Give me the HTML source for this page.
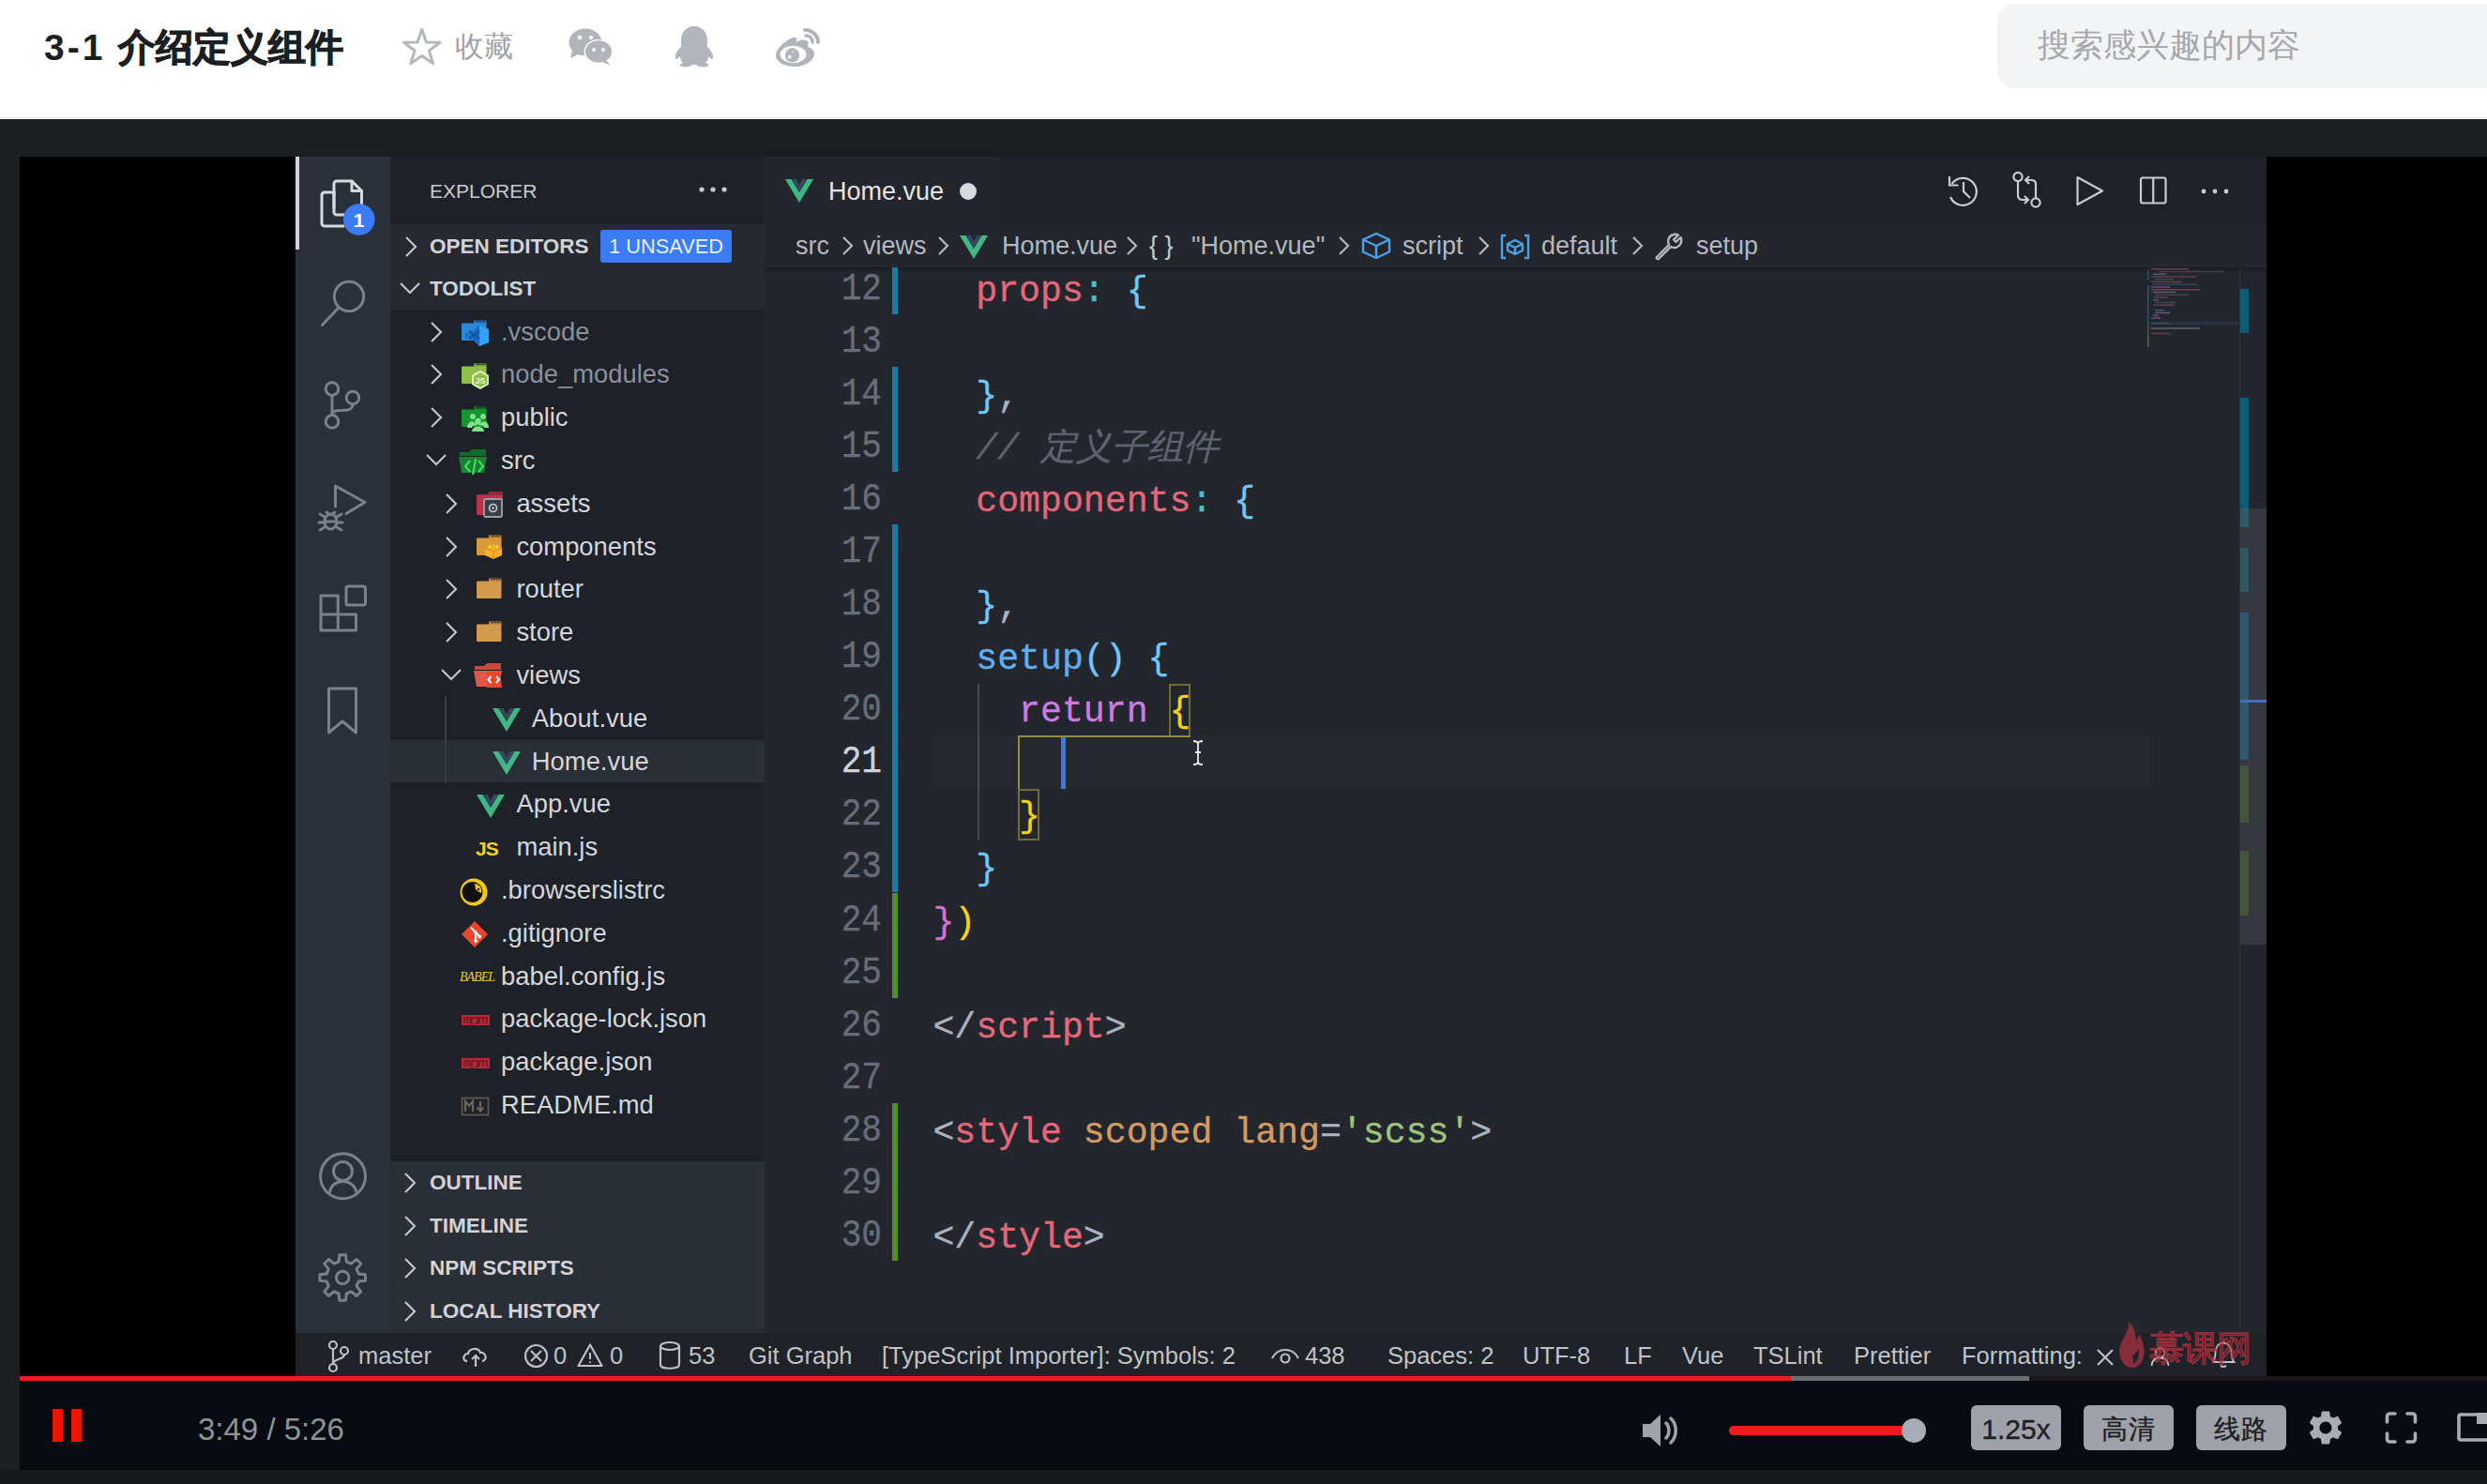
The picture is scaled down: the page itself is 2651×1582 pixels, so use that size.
<!DOCTYPE html><html><head><meta charset="utf-8"><style>
*{margin:0;padding:0;box-sizing:border-box}
html,body{width:2651px;height:1582px;overflow:hidden;background:#fff;font-family:"Liberation Sans",sans-serif}
.a{position:absolute;white-space:nowrap}
.m{font-family:"Liberation Mono",monospace;-webkit-text-stroke:0.35px currentColor}
.t{font-size:27.4px;color:#d3d6dc;line-height:46px}
.sec{font-size:22.5px;font-weight:bold;color:#d0d3d9;line-height:46px}
.sb{font-size:25.5px;color:#bfc3ca;line-height:46px}
</style></head><body>
<div class="a" style="left:0px;top:0px;width:2651px;height:127px;background:#fff;"></div>
<div class="a" style="left:0px;top:125px;width:2651px;height:2px;background:#f0f1f3;"></div>
<div class="a" style="left:47px;top:26px;font-size:40px;font-weight:bold;color:#1c1f21;line-height:48px"><span style="letter-spacing:3px;font-size:39px">3-1 </span><span style="-webkit-text-stroke:1.1px #1c1f21">介绍定义组件</span></div>
<svg class="a" style="left:427px;top:27.8px" width="46" height="44" viewBox="0 0 46 44"><path d="M22.7 3.3 L27.4 17.0 L41.9 17.3 L30.4 26.0 L34.6 39.8 L22.7 31.6 L10.8 39.8 L15.0 26.0 L3.5 17.3 L18.0 17.0 Z" fill="none" stroke="#b3b8be" stroke-width="3" stroke-linejoin="round"/></svg>
<div class="a " style="left:485px;top:31px;font-size:31px;color:#9ea3aa;line-height:38px">收藏</div>
<svg class="a" style="left:604px;top:28px" width="52" height="44" viewBox="0 0 52 44">
<ellipse cx="20" cy="17" rx="17.5" ry="14.5" fill="#b1b5bb"/><path d="M6 26 L4 34 L14 29 Z" fill="#b1b5bb"/>
<ellipse cx="34" cy="27" rx="15.5" ry="13" fill="#fff"/><ellipse cx="34" cy="27" rx="14" ry="11.8" fill="#b1b5bb"/>
<path d="M42 36 L47 42 L38 38 Z" fill="#b1b5bb"/>
<circle cx="14" cy="12" r="2.2" fill="#fff"/><circle cx="26" cy="12" r="2.2" fill="#fff"/>
<circle cx="29" cy="25" r="2" fill="#fff"/><circle cx="39" cy="25" r="2" fill="#fff"/></svg>
<svg class="a" style="left:718px;top:27px" width="44" height="46" viewBox="0 0 44 46">
<path d="M22 1 C13 1 8 8 8 16 C8 19 8.5 21 8 23 C5 26 1 31 2 35 C3 37 5 35 6.5 33 C7 36 8 38 10 40 C6 41 5 43 9 44 C13 45 18 44 20 42 L24 42 C26 44 31 45 35 44 C39 43 38 41 34 40 C36 38 37 36 37.5 33 C39 35 41 37 42 35 C43 31 39 26 36 23 C35.5 21 36 19 36 16 C36 8 31 1 22 1 Z" fill="#b1b5bb"/></svg>
<svg class="a" style="left:824px;top:28px" width="52" height="44" viewBox="0 0 52 44">
<path d="M21 12 C13 15 3 24 3 31 C3 38 12 43 23 43 C35 43 44 36 44 29 C44 25 40 23 37 22 C38 19 38 16 35 15 C32 14 28 15 25 17 C26 14 25 11 21 12 Z" fill="#b1b5bb"/>
<ellipse cx="21.5" cy="30" rx="14" ry="9.2" fill="#fff"/><circle cx="20.5" cy="30.8" r="7.6" fill="#b1b5bb"/>
<circle cx="17.8" cy="32.6" r="1.9" fill="#fff"/><path d="M20.5 27.8 L22.5 26.8" stroke="#fff" stroke-width="1"/>
<path d="M34 4 C42 4 48 10 48 17" fill="none" stroke="#b1b5bb" stroke-width="4" stroke-linecap="round"/>
<path d="M35 10 C39 10 42 13 42 17" fill="none" stroke="#b1b5bb" stroke-width="3.5" stroke-linecap="round"/></svg>
<div class="a" style="left:2129px;top:4px;width:540px;height:90px;background:#f3f4f6;border-radius:19px"></div>
<div class="a " style="left:2172px;top:26px;font-size:35px;color:#a5a8ad;line-height:44px">搜索感兴趣的内容</div>
<div class="a" style="left:0px;top:127px;width:2651px;height:1455px;background:#1c1f21;"></div>
<div class="a" style="left:21px;top:167px;width:2630px;height:1305px;background:#000;"></div>
<div class="a" style="left:315px;top:167px;width:101px;height:1254px;background:#2a3037;"></div>
<div class="a" style="left:416px;top:167px;width:399px;height:1254px;background:#1e2128;"></div>
<div class="a" style="left:815px;top:167px;width:1601px;height:1254px;background:#23262d;"></div>
<div class="a" style="left:815px;top:167px;width:1601px;height:71px;background:#1e2127;"></div>
<div class="a" style="left:815px;top:167px;width:250px;height:71px;background:#23262d;"></div>
<div class="a" style="left:815px;top:238px;width:1601px;height:47px;background:#23262d;"></div>
<div class="a" style="left:815px;top:285px;width:1601px;height:6px;background:linear-gradient(#1a1c20,rgba(35,38,45,0));"></div>
<div class="a" style="left:416px;top:239px;width:399px;height:46px;background:#262a30;"></div>
<div class="a" style="left:416px;top:285px;width:399px;height:46px;background:#262a30;"></div>
<div class="a" style="left:416px;top:1238px;width:399px;height:183px;background:#2a2e35;"></div>
<div class="a" style="left:315px;top:1421px;width:2101px;height:46px;background:#1f2227;"></div>
<svg class="a" style="left:315px;top:167px" width="101" height="1254" viewBox="315 167 101 1254" fill="none" stroke="#7b818a" stroke-width="3" stroke-linejoin="round" stroke-linecap="round">
<rect x="315" y="167" width="4" height="99" fill="#cfd3da" stroke="none"/>
<path d="M356 222 V196 a3 3 0 0 1 3 -3 H375 L385.5 203.5 V222" stroke="#d7dae0"/>
<path d="M375 193 V203.5 H385.5" stroke="#d7dae0"/>
<path d="M356 205 H346 a3 3 0 0 0 -3 3 V238 a3 3 0 0 0 3 3 H366" stroke="#d7dae0"/>
<path d="M356 205 V226 a3 3 0 0 0 3 3 H368" stroke="#d7dae0"/>
<circle cx="382.7" cy="234" r="16.8" fill="#3b7bf5" stroke="none"/>
<text x="382.5" y="242" fill="#fff" stroke="none" font-family="Liberation Sans" font-weight="bold" font-size="21" text-anchor="middle">1</text>
<circle cx="372" cy="316" r="15.7"/>
<path d="M360 329 L343.5 346.5"/>
<circle cx="354" cy="414.6" r="6.8"/><circle cx="376" cy="424" r="6.8"/><circle cx="354" cy="449.4" r="6.8"/>
<path d="M354 421.4 V442.6"/><path d="M376 430.8 C376 438 368 437.5 362 437.5 C357 437.5 354 439 354 442"/>
<path d="M357.5 540 V518 L389 535.5 L369 547.5"/>
<ellipse cx="352.4" cy="556" rx="6.5" ry="8"/>
<path d="M346 556 H359 M341 548 L346 551 M364 548 L359 551 M340 557 H345.5 M359.5 557 H365 M341 565 L346 562 M364 565 L359 562 M348 546 L352.4 549 L357 546"/>
<path d="M342 635 H360.3 V655 H379.5 V672 H342 Z M342 655 H360.3 V672"/>
<rect x="369" y="625" width="20.5" height="20" rx="2"/>
<path d="M350.5 734 H379.5 V781 L365 769 L350.5 781 Z"/>
<circle cx="365.5" cy="1253.8" r="24"/>
<circle cx="365.5" cy="1248.5" r="10"/>
<path d="M351 1272 C353 1263 358.5 1259.5 365.5 1259.5 C372.5 1259.5 378 1263 380.5 1272"/>
<circle cx="365.2" cy="1362" r="6.8"/>

<path d="M382.2 1357.9 L389.5 1358.7 L389.5 1365.3 L382.2 1366.1 L380.1 1371.1 L384.7 1376.9 L380.1 1381.5 L374.3 1376.9 L369.3 1379.0 L368.5 1386.3 L361.9 1386.3 L361.1 1379.0 L356.1 1376.9 L350.3 1381.5 L345.7 1376.9 L350.3 1371.1 L348.2 1366.1 L340.9 1365.3 L340.9 1358.7 L348.2 1357.9 L350.3 1352.9 L345.7 1347.1 L350.3 1342.5 L356.1 1347.1 L361.1 1345.0 L361.9 1337.7 L368.5 1337.7 L369.3 1345.0 L374.3 1347.1 L380.1 1342.5 L384.7 1347.1 L380.1 1352.9 Z" stroke-linejoin="round"/></svg>
<div class="a " style="left:458px;top:181px;font-size:21px;color:#c8ccd2;line-height:46px">EXPLORER</div>
<svg class="a" style="left:740px;top:195px" width="40" height="14"><circle cx="8" cy="7" r="2.6" fill="#c8ccd2"/><circle cx="20" cy="7" r="2.6" fill="#c8ccd2"/><circle cx="32" cy="7" r="2.6" fill="#c8ccd2"/></svg>
<svg class="a" style="left:430px;top:251px" width="18" height="24"><path d="M3 2 L13 12 L3 22" fill="none" stroke="#c5c9cf" stroke-width="2.1"/></svg>
<div class="a sec" style="left:458px;top:240px;">OPEN EDITORS</div>
<div class="a" style="left:640px;top:245px;width:140px;height:35px;background:#3b7bf5;border-radius:3px"></div>
<div class="a " style="left:640px;top:245px;width:140px;text-align:center;font-size:21.8px;color:#e8f0ff;line-height:36px">1 UNSAVED</div>
<svg class="a" style="left:425px;top:299px" width="24" height="16"><path d="M2 3 L12 13 L22 3" fill="none" stroke="#c5c9cf" stroke-width="2.1"/></svg>
<div class="a sec" style="left:458px;top:285px;">TODOLIST</div>
<svg class="a" style="left:429px;top:1249px" width="18" height="24"><path d="M3 2 L13 12 L3 22" fill="none" stroke="#c5c9cf" stroke-width="2.1"/></svg>
<div class="a sec" style="left:458px;top:1238px;">OUTLINE</div>
<svg class="a" style="left:429px;top:1294.6px" width="18" height="24"><path d="M3 2 L13 12 L3 22" fill="none" stroke="#c5c9cf" stroke-width="2.1"/></svg>
<div class="a sec" style="left:458px;top:1283.6px;">TIMELINE</div>
<svg class="a" style="left:429px;top:1340px" width="18" height="24"><path d="M3 2 L13 12 L3 22" fill="none" stroke="#c5c9cf" stroke-width="2.1"/></svg>
<div class="a sec" style="left:458px;top:1329px;">NPM SCRIPTS</div>
<svg class="a" style="left:429px;top:1386px" width="18" height="24"><path d="M3 2 L13 12 L3 22" fill="none" stroke="#c5c9cf" stroke-width="2.1"/></svg>
<div class="a sec" style="left:458px;top:1375px;">LOCAL HISTORY</div>
<div class="a" style="left:416px;top:789px;width:399px;height:45px;background:#2a2e35;"></div>
<div class="a" style="left:474px;top:743px;width:2px;height:91px;background:#3a3e45;"></div>
<svg class="a" style="left:457.0px;top:341.6px" width="18" height="24"><path d="M3 2 L13 12 L3 22" fill="none" stroke="#c5c9cf" stroke-width="2.1"/></svg>
<svg class="a" style="left:491px;top:340px" width="32" height="30" viewBox="0 0 32 30"><path d="M14 1.5 H27.5 V6 H14 Z" fill="#2578c4"/><path d="M16 2.6 H26.5" stroke="#1e2128" stroke-width="1.2" opacity="0.6"/><rect x="1" y="4.5" width="26.5" height="18.5" rx="1" fill="#2b88d9"/><path d="M20 6 L30 11 V25 L20 29 L9 19 L5 22 V14 L9 17 Z" fill="#1a6fc0"/><path d="M20 6 L20 29 L30 25 V11 Z" fill="#35a0f0"/><path d="M9 13 L20 21 M9 21 L20 13" stroke="#0f5aa8" stroke-width="2.5"/></svg>
<div class="a t" style="left:534.0px;top:330.6px;color:#8b9099">.vscode</div>
<svg class="a" style="left:457.0px;top:387.40000000000003px" width="18" height="24"><path d="M3 2 L13 12 L3 22" fill="none" stroke="#c5c9cf" stroke-width="2.1"/></svg>
<svg class="a" style="left:491px;top:386px" width="32" height="30" viewBox="0 0 32 30"><path d="M14 1.5 H27.5 V6 H14 Z" fill="#7aa83e"/><path d="M16 2.6 H26.5" stroke="#1e2128" stroke-width="1.2" opacity="0.6"/><rect x="1" y="4.5" width="26.5" height="18.5" rx="1" fill="#8fbf4a"/><path d="M21 10 L29 14.5 V23.5 L21 28 L13 23.5 V14.5 Z" fill="#8fbf4a" stroke="#e9f5d0" stroke-width="1.8"/><text x="21" y="23" font-family="Liberation Sans" font-weight="bold" font-size="9" fill="#f0f8e0" text-anchor="middle">JS</text></svg>
<div class="a t" style="left:534.0px;top:376.4px;color:#8b9099">node_modules</div>
<svg class="a" style="left:457.0px;top:433.20000000000005px" width="18" height="24"><path d="M3 2 L13 12 L3 22" fill="none" stroke="#c5c9cf" stroke-width="2.1"/></svg>
<svg class="a" style="left:491px;top:432px" width="32" height="30" viewBox="0 0 32 30"><path d="M14 1.5 H27.5 V6 H14 Z" fill="#137a28"/><path d="M16 2.6 H26.5" stroke="#1e2128" stroke-width="1.2" opacity="0.6"/><rect x="1" y="4.5" width="26.5" height="18.5" rx="1" fill="#16962f"/><circle cx="13" cy="12" r="3" fill="#80e08c"/><circle cx="24" cy="12" r="3" fill="#80e08c"/><circle cx="18.5" cy="17" r="3.2" fill="#80e08c"/><path d="M8 23 C8 17 18 17 18 21 M19 21 C19 17 29 17 29 23 Z" fill="#80e08c"/><path d="M12 28 C12 21 25 21 25 28 Z" fill="#80e08c"/><path d="M7 24 C7 18 12 16 14 18 L12 24 Z M30 24 C30 18 25 16 23 18 L25 24Z" fill="#80e08c"/></svg>
<div class="a t" style="left:534.0px;top:422.2px;color:#d3d6dc">public</div>
<svg class="a" style="left:453.0px;top:482.0px" width="24" height="16"><path d="M2 3 L12 13 L22 3" fill="none" stroke="#c5c9cf" stroke-width="2.1"/></svg>
<svg class="a" style="left:489px;top:478px" width="34" height="30" viewBox="0 0 34 30"><path d="M1 4 H11 L14 1 H29 V8 H1 Z" fill="#146a2c"/><path d="M0 9 H30 L27 26 H3 Z" fill="#1b7f36"/><path d="M12 13 L7 19 L12 25 M21 13 L26 19 L21 25 M18 11 L15 28" fill="none" stroke="#3ee05a" stroke-width="2.2"/></svg>
<div class="a t" style="left:534.0px;top:468.0px;color:#d3d6dc">src</div>
<svg class="a" style="left:473.4px;top:524.8px" width="18" height="24"><path d="M3 2 L13 12 L3 22" fill="none" stroke="#c5c9cf" stroke-width="2.1"/></svg>
<svg class="a" style="left:507px;top:523px" width="32" height="30" viewBox="0 0 32 30"><path d="M1 4 H12 L15 1 H29 V8 H1 Z" fill="#8e2a3a"/><rect x="1" y="5" width="28" height="21" rx="1" fill="#b8334a"/><rect x="9" y="9" width="19" height="19" rx="1.5" fill="#3a3d44" stroke="#9aa0a8" stroke-width="1.8"/><circle cx="18.5" cy="18.5" r="4" fill="none" stroke="#c8ccd2" stroke-width="1.6"/><circle cx="18.5" cy="18.5" r="1.2" fill="#c8ccd2"/></svg>
<div class="a t" style="left:550.4px;top:513.8px;color:#d3d6dc">assets</div>
<svg class="a" style="left:473.4px;top:570.6px" width="18" height="24"><path d="M3 2 L13 12 L3 22" fill="none" stroke="#c5c9cf" stroke-width="2.1"/></svg>
<svg class="a" style="left:507px;top:569px" width="32" height="30" viewBox="0 0 32 30"><path d="M14 1.5 H27.5 V6 H14 Z" fill="#c4862f"/><path d="M16 2.6 H26.5" stroke="#1e2128" stroke-width="1.2" opacity="0.6"/><rect x="1" y="4.5" width="26.5" height="18.5" rx="1" fill="#d99a3c"/><path d="M19 11 L28 15 L28 23 L19 27 L10 23 L10 15 Z" fill="#f5b32a"/><path d="M10 15 L19 19 L28 15 M19 19 V27" stroke="#e0901a" stroke-width="1.5" fill="none"/><circle cx="15" cy="14" r="1.4" fill="#ffd060"/><circle cx="23" cy="14" r="1.4" fill="#ffd060"/></svg>
<div class="a t" style="left:550.4px;top:559.6px;color:#d3d6dc">components</div>
<svg class="a" style="left:473.4px;top:616.4px" width="18" height="24"><path d="M3 2 L13 12 L3 22" fill="none" stroke="#c5c9cf" stroke-width="2.1"/></svg>
<svg class="a" style="left:507px;top:615px" width="32" height="30" viewBox="0 0 32 30"><path d="M14 1.5 H27.5 V6 H14 Z" fill="#b9843e"/><path d="M16 2.6 H26.5" stroke="#1e2128" stroke-width="1.2" opacity="0.6"/><rect x="1" y="4.5" width="26.5" height="18.5" rx="1" fill="#d19a4c"/></svg>
<div class="a t" style="left:550.4px;top:605.4px;color:#d3d6dc">router</div>
<svg class="a" style="left:473.4px;top:662.2px" width="18" height="24"><path d="M3 2 L13 12 L3 22" fill="none" stroke="#c5c9cf" stroke-width="2.1"/></svg>
<svg class="a" style="left:507px;top:661px" width="32" height="30" viewBox="0 0 32 30"><path d="M14 1.5 H27.5 V6 H14 Z" fill="#b9843e"/><path d="M16 2.6 H26.5" stroke="#1e2128" stroke-width="1.2" opacity="0.6"/><rect x="1" y="4.5" width="26.5" height="18.5" rx="1" fill="#d19a4c"/></svg>
<div class="a t" style="left:550.4px;top:651.2px;color:#d3d6dc">store</div>
<svg class="a" style="left:469.4px;top:711.0px" width="24" height="16"><path d="M2 3 L12 13 L22 3" fill="none" stroke="#c5c9cf" stroke-width="2.1"/></svg>
<svg class="a" style="left:505px;top:706px" width="34" height="30" viewBox="0 0 34 30"><path d="M1 4 H11 L14 1 H29 V8 H1 Z" fill="#c84a3e"/><path d="M0 9 H30 L27 26 H3 Z" fill="#e0584a"/><path d="M14 10 L28 10 L30 27 L14 27 Z" fill="#e8442e"/><path d="M18.5 15 L15.5 18.5 L18.5 22 M24 15 L27 18.5 L24 22" fill="none" stroke="#fff" stroke-width="2"/></svg>
<div class="a t" style="left:550.4px;top:697.0px;color:#d3d6dc">views</div>
<svg class="a" style="left:524px;top:752px" width="32" height="30" viewBox="0 0 32 30"><path d="M1 3 H7.5 L16 17 L24.5 3 H31 L16 28 Z" fill="#41b883"/><path d="M7.5 3 H12.5 L16 9 L19.5 3 H24.5 L16 17 Z" fill="#35495e"/></svg>
<div class="a t" style="left:566.8px;top:742.8px;color:#d3d6dc">About.vue</div>
<svg class="a" style="left:524px;top:798px" width="32" height="30" viewBox="0 0 32 30"><path d="M1 3 H7.5 L16 17 L24.5 3 H31 L16 28 Z" fill="#41b883"/><path d="M7.5 3 H12.5 L16 9 L19.5 3 H24.5 L16 17 Z" fill="#35495e"/></svg>
<div class="a t" style="left:566.8px;top:788.6px;color:#d3d6dc">Home.vue</div>
<svg class="a" style="left:507px;top:844px" width="32" height="30" viewBox="0 0 32 30"><path d="M1 3 H7.5 L16 17 L24.5 3 H31 L16 28 Z" fill="#41b883"/><path d="M7.5 3 H12.5 L16 9 L19.5 3 H24.5 L16 17 Z" fill="#35495e"/></svg>
<div class="a t" style="left:550.4px;top:834.4px;color:#d3d6dc">App.vue</div>
<div class="a" style="left:507px;top:890px;font-size:21px;font-weight:bold;color:#f0d030;line-height:30px;letter-spacing:-1px">JS</div>
<div class="a t" style="left:550.4px;top:880.2px;color:#d3d6dc">main.js</div>
<svg class="a" style="left:489px;top:936px" width="34" height="30" viewBox="0 0 34 30"><circle cx="16" cy="15" r="14.5" fill="#f2c919"/><circle cx="14.5" cy="15" r="11" fill="#111"/><path d="M17 6 C23 7 25 12 24 16 C22 15 20 14 18 12 Z" fill="#f2c919"/><circle cx="21" cy="12" r="1.2" fill="#111"/></svg>
<div class="a t" style="left:534.0px;top:926.0px;color:#d3d6dc">.browserslistrc</div>
<svg class="a" style="left:491px;top:981px" width="32" height="30" viewBox="0 0 32 30"><path d="M15 1 L29 15 L15 29 L1 15 Z" fill="#e8452c"/><path d="M11 8 L16 13 V22 M16 13 L20 17" stroke="#fff" stroke-width="2" fill="none"/><circle cx="16" cy="22" r="2" fill="#fff"/><circle cx="20" cy="17.5" r="2" fill="#fff"/><circle cx="16" cy="13" r="1.8" fill="#fff"/></svg>
<div class="a t" style="left:534.0px;top:971.8px;color:#d3d6dc">.gitignore</div>
<div class="a" style="left:490px;top:1027px;font-family:'Liberation Serif',serif;font-style:italic;font-size:14px;color:#e8c82a;line-height:30px;letter-spacing:-1px">BABEL</div>
<div class="a t" style="left:534.0px;top:1017.6px;color:#d3d6dc">babel.config.js</div>
<svg class="a" style="left:491px;top:1073px" width="32" height="30" viewBox="0 0 32 30"><rect x="1" y="9" width="30" height="11" fill="#b8283a"/><path d="M4 18 V12 H10 V18 M7 12 V18 M12 20 V12 H18 V18 H15 M20 18 V12 H28 V18 M24 12 V18" stroke="#6e1a24" stroke-width="1.6" fill="none"/></svg>
<div class="a t" style="left:534.0px;top:1063.4px;color:#d3d6dc">package-lock.json</div>
<svg class="a" style="left:491px;top:1119px" width="32" height="30" viewBox="0 0 32 30"><rect x="1" y="9" width="30" height="11" fill="#b8283a"/><path d="M4 18 V12 H10 V18 M7 12 V18 M12 20 V12 H18 V18 H15 M20 18 V12 H28 V18 M24 12 V18" stroke="#6e1a24" stroke-width="1.6" fill="none"/></svg>
<div class="a t" style="left:534.0px;top:1109.2px;color:#d3d6dc">package.json</div>
<svg class="a" style="left:491px;top:1164px" width="32" height="30" viewBox="0 0 32 30"><rect x="1.5" y="6.5" width="28" height="18" fill="none" stroke="#5e5650" stroke-width="1.8"/><path d="M5 21 V10 L9 15 L13 10 V21" stroke="#6a625c" stroke-width="2.2" fill="none"/><path d="M21 10 V20 M17.5 16.5 L21 20.5 L24.5 16.5" stroke="#6a625c" stroke-width="2.2" fill="none"/></svg>
<div class="a t" style="left:534.0px;top:1155.0px;color:#d3d6dc">README.md</div>
<svg class="a" style="left:836px;top:188px" width="32" height="30" viewBox="0 0 32 30"><path d="M1 3 H7.5 L16 17 L24.5 3 H31 L16 28 Z" fill="#41b883"/><path d="M7.5 3 H12.5 L16 9 L19.5 3 H24.5 L16 17 Z" fill="#35495e"/></svg>
<div class="a " style="left:883px;top:181px;font-size:27px;color:#e2e4e8;line-height:46px">Home.vue</div>
<div class="a" style="left:1023px;top:195px;width:18px;height:18px;border-radius:9px;background:#d8dade"></div>
<svg class="a" style="left:2060px;top:175px" width="340" height="60" viewBox="2060 175 340 60" fill="none" stroke="#c9ccd2" stroke-width="2.2">
<path d="M2080.5 196 A14.5 14.5 0 1 1 2079 210" />
<path d="M2078 188 V197.5 H2087.5"/>
<path d="M2093 194 V204 L2100 211"/>
<circle cx="2151" cy="188.5" r="4.6"/><circle cx="2170" cy="216" r="4.6"/>
<path d="M2151 193 V208 C2151 212 2153 213 2156 213 H2162 M2158 209 L2162 213 L2158 217"/>
<path d="M2170 211.5 V196 C2170 193 2168 192 2165 192 H2159 M2163 188 L2159 192 L2163 196"/>
<path d="M2214.5 189 L2241 203.5 L2214.5 218 Z" stroke-linejoin="round"/>
<rect x="2282" y="189.5" width="26.5" height="27" rx="2"/><path d="M2295.2 189.5 V216.5"/>
<circle cx="2349" cy="204" r="2.4" fill="#c9ccd2" stroke="none"/><circle cx="2361" cy="204" r="2.4" fill="#c9ccd2" stroke="none"/><circle cx="2373" cy="204" r="2.4" fill="#c9ccd2" stroke="none"/>
</svg>
<div class="a " style="left:848px;top:239px;font-size:27px;color:#b4b8bf;line-height:46px">src</div>
<svg class="a" style="left:897px;top:250px" width="14" height="24"><path d="M2 3 L11 12 L2 21" fill="none" stroke="#b4b8bf" stroke-width="2.2"/></svg>
<div class="a " style="left:920px;top:239px;font-size:27px;color:#b4b8bf;line-height:46px">views</div>
<svg class="a" style="left:999px;top:250px" width="14" height="24"><path d="M2 3 L11 12 L2 21" fill="none" stroke="#b4b8bf" stroke-width="2.2"/></svg>
<svg class="a" style="left:1022px;top:248px" width="32" height="30" viewBox="0 0 32 30"><path d="M1 3 H7.5 L16 17 L24.5 3 H31 L16 28 Z" fill="#41b883"/><path d="M7.5 3 H12.5 L16 9 L19.5 3 H24.5 L16 17 Z" fill="#35495e"/></svg>
<div class="a " style="left:1068px;top:239px;font-size:27px;color:#b4b8bf;line-height:46px">Home.vue</div>
<svg class="a" style="left:1200px;top:250px" width="14" height="24"><path d="M2 3 L11 12 L2 21" fill="none" stroke="#b4b8bf" stroke-width="2.2"/></svg>
<div class="a " style="left:1225px;top:239px;font-size:27px;color:#c6cad0;line-height:46px">{ }</div>
<div class="a " style="left:1270px;top:239px;font-size:27px;color:#b4b8bf;line-height:46px">"Home.vue"</div>
<svg class="a" style="left:1426px;top:250px" width="14" height="24"><path d="M2 3 L11 12 L2 21" fill="none" stroke="#b4b8bf" stroke-width="2.2"/></svg>
<svg class="a" style="left:1450px;top:246px" width="34" height="32" viewBox="0 0 34 32" fill="none" stroke="#4aa3e8" stroke-width="2.4" stroke-linejoin="round">
<path d="M17 3 L31 9.5 V22.5 L17 29 L3 22.5 V9.5 Z"/><path d="M3 9.5 L17 16 L31 9.5 M17 16 V29"/></svg>
<div class="a " style="left:1495px;top:239px;font-size:27px;color:#b4b8bf;line-height:46px">script</div>
<svg class="a" style="left:1575px;top:250px" width="14" height="24"><path d="M2 3 L11 12 L2 21" fill="none" stroke="#b4b8bf" stroke-width="2.2"/></svg>
<svg class="a" style="left:1598px;top:248px" width="34" height="30" viewBox="0 0 34 30" fill="none" stroke="#4aa3e8" stroke-width="2.4" stroke-linejoin="round">
<path d="M7 3 H3 V27 H7 M27 3 H31 V27 H27"/><path d="M17 8 L25 12 V19 L17 23 L9 19 V12 Z M9 12 L17 16 L25 12 M17 16 V23"/></svg>
<div class="a " style="left:1643px;top:239px;font-size:27px;color:#b4b8bf;line-height:46px">default</div>
<svg class="a" style="left:1739px;top:250px" width="14" height="24"><path d="M2 3 L11 12 L2 21" fill="none" stroke="#b4b8bf" stroke-width="2.2"/></svg>
<svg class="a" style="left:1762px;top:246px" width="34" height="34" viewBox="0 0 34 34" fill="none" stroke="#b4b8bf" stroke-width="2.4" stroke-linejoin="round">
<path d="M4 28 L17 15 C15 10 17 5 22 4 C24 3.5 26 4 27 4.5 L22 9.5 L24.5 12 L29.5 7 C30.5 9 30.5 12 29 14.5 C27 18 23 19 19 17 L6 30 C5 31 3 29 4 28 Z"/></svg>
<div class="a " style="left:1808px;top:239px;font-size:27px;color:#b4b8bf;line-height:46px">setup</div>
<div class="a" style="left:997px;top:784px;width:1293px;height:56px;background:#262930;"></div>
<div class="a" style="left:951px;top:285px;width:6px;height:50px;background:#167ea3;"></div>
<div class="a" style="left:951px;top:391.1px;width:6px;height:112.1px;background:#167ea3;"></div>
<div class="a" style="left:951px;top:559.2px;width:6px;height:392.3px;background:#167ea3;"></div>
<div class="a" style="left:951px;top:951.5px;width:6px;height:112.1px;background:#4f8f22;"></div>
<div class="a" style="left:951px;top:1175.6px;width:6px;height:168.1px;background:#4f8f22;"></div>
<div class="a m" style="left:839px;top:280.0px;width:101px;text-align:right;font-size:41px;line-height:56px;color:#666d7b;transform:scaleX(0.88);transform-origin:100% 50%">12</div>
<div class="a m" style="left:839px;top:336.0px;width:101px;text-align:right;font-size:41px;line-height:56px;color:#666d7b;transform:scaleX(0.88);transform-origin:100% 50%">13</div>
<div class="a m" style="left:839px;top:392.1px;width:101px;text-align:right;font-size:41px;line-height:56px;color:#666d7b;transform:scaleX(0.88);transform-origin:100% 50%">14</div>
<div class="a m" style="left:839px;top:448.1px;width:101px;text-align:right;font-size:41px;line-height:56px;color:#666d7b;transform:scaleX(0.88);transform-origin:100% 50%">15</div>
<div class="a m" style="left:839px;top:504.2px;width:101px;text-align:right;font-size:41px;line-height:56px;color:#666d7b;transform:scaleX(0.88);transform-origin:100% 50%">16</div>
<div class="a m" style="left:839px;top:560.2px;width:101px;text-align:right;font-size:41px;line-height:56px;color:#666d7b;transform:scaleX(0.88);transform-origin:100% 50%">17</div>
<div class="a m" style="left:839px;top:616.2px;width:101px;text-align:right;font-size:41px;line-height:56px;color:#666d7b;transform:scaleX(0.88);transform-origin:100% 50%">18</div>
<div class="a m" style="left:839px;top:672.3px;width:101px;text-align:right;font-size:41px;line-height:56px;color:#666d7b;transform:scaleX(0.88);transform-origin:100% 50%">19</div>
<div class="a m" style="left:839px;top:728.3px;width:101px;text-align:right;font-size:41px;line-height:56px;color:#666d7b;transform:scaleX(0.88);transform-origin:100% 50%">20</div>
<div class="a m" style="left:839px;top:784.4px;width:101px;text-align:right;font-size:41px;line-height:56px;color:#d0d3d8;transform:scaleX(0.88);transform-origin:100% 50%">21</div>
<div class="a m" style="left:839px;top:840.4px;width:101px;text-align:right;font-size:41px;line-height:56px;color:#666d7b;transform:scaleX(0.88);transform-origin:100% 50%">22</div>
<div class="a m" style="left:839px;top:896.4px;width:101px;text-align:right;font-size:41px;line-height:56px;color:#666d7b;transform:scaleX(0.88);transform-origin:100% 50%">23</div>
<div class="a m" style="left:839px;top:952.5px;width:101px;text-align:right;font-size:41px;line-height:56px;color:#666d7b;transform:scaleX(0.88);transform-origin:100% 50%">24</div>
<div class="a m" style="left:839px;top:1008.5px;width:101px;text-align:right;font-size:41px;line-height:56px;color:#666d7b;transform:scaleX(0.88);transform-origin:100% 50%">25</div>
<div class="a m" style="left:839px;top:1064.6px;width:101px;text-align:right;font-size:41px;line-height:56px;color:#666d7b;transform:scaleX(0.88);transform-origin:100% 50%">26</div>
<div class="a m" style="left:839px;top:1120.6px;width:101px;text-align:right;font-size:41px;line-height:56px;color:#666d7b;transform:scaleX(0.88);transform-origin:100% 50%">27</div>
<div class="a m" style="left:839px;top:1176.6px;width:101px;text-align:right;font-size:41px;line-height:56px;color:#666d7b;transform:scaleX(0.88);transform-origin:100% 50%">28</div>
<div class="a m" style="left:839px;top:1232.7px;width:101px;text-align:right;font-size:41px;line-height:56px;color:#666d7b;transform:scaleX(0.88);transform-origin:100% 50%">29</div>
<div class="a m" style="left:839px;top:1288.7px;width:101px;text-align:right;font-size:41px;line-height:56px;color:#666d7b;transform:scaleX(0.88);transform-origin:100% 50%">30</div>
<div class="a" style="left:1041.5px;top:729px;width:2px;height:167px;background:#454950;"></div>
<div class="a" style="left:1246px;top:729px;width:23px;height:57px;border:2px solid #6f6d3c;border-bottom:none"></div>
<div class="a" style="left:1085px;top:783.5px;width:184px;height:2.2px;background:#8f8b3a;"></div>
<div class="a" style="left:1085px;top:783.5px;width:2.2px;height:59px;background:#8f8b3a;"></div>
<div class="a" style="left:1085px;top:841px;width:23px;height:55px;border:2px solid #6f6d3c"></div>
<div class="a m" style="left:994.4px;top:283.0px;font-size:38.2px;line-height:56px;white-space:pre">  <span style="color:#e5677b;">props</span><span style="color:#4ebfc5;">:</span> <span style="color:#74c6f5;">{</span></div>
<div class="a m" style="left:994.4px;top:395.1px;font-size:38.2px;line-height:56px;white-space:pre">  <span style="color:#74c6f5;">}</span><span style="color:#abb2bf;">,</span></div>
<div class="a m" style="left:994.4px;top:451.1px;font-size:38.2px;line-height:56px;white-space:pre">  <span style="color:#5d6470;font-style:italic">// 定义子组件</span></div>
<div class="a m" style="left:994.4px;top:507.2px;font-size:38.2px;line-height:56px;white-space:pre">  <span style="color:#e5677b;">components</span><span style="color:#4ebfc5;">:</span> <span style="color:#74c6f5;">{</span></div>
<div class="a m" style="left:994.4px;top:619.2px;font-size:38.2px;line-height:56px;white-space:pre">  <span style="color:#74c6f5;">}</span><span style="color:#abb2bf;">,</span></div>
<div class="a m" style="left:994.4px;top:675.3px;font-size:38.2px;line-height:56px;white-space:pre">  <span style="color:#5eaef0;">setup</span><span style="color:#74c6f5;">()</span> <span style="color:#74c6f5;">{</span></div>
<div class="a m" style="left:994.4px;top:731.3px;font-size:38.2px;line-height:56px;white-space:pre">    <span style="color:#cc7ce0;">return</span> <span style="color:#f5d21a;">{</span></div>
<div class="a m" style="left:994.4px;top:843.4px;font-size:38.2px;line-height:56px;white-space:pre">    <span style="color:#f5d21a;">}</span></div>
<div class="a m" style="left:994.4px;top:899.4px;font-size:38.2px;line-height:56px;white-space:pre">  <span style="color:#74c6f5;">}</span></div>
<div class="a m" style="left:994.4px;top:955.5px;font-size:38.2px;line-height:56px;white-space:pre"><span style="color:#d870d4;">}</span><span style="color:#f5d21a;">)</span></div>
<div class="a m" style="left:994.4px;top:1067.6px;font-size:38.2px;line-height:56px;white-space:pre"><span style="color:#abb2bf;">&lt;/</span><span style="color:#e5677b;">script</span><span style="color:#abb2bf;">&gt;</span></div>
<div class="a m" style="left:994.4px;top:1179.6px;font-size:38.2px;line-height:56px;white-space:pre"><span style="color:#abb2bf;">&lt;</span><span style="color:#e5677b;">style</span> <span style="color:#d59a62;">scoped</span> <span style="color:#d59a62;">lang</span><span style="color:#abb2bf;">=</span><span style="color:#9cc57c;">'scss'</span><span style="color:#abb2bf;">&gt;</span></div>
<div class="a m" style="left:994.4px;top:1291.7px;font-size:38.2px;line-height:56px;white-space:pre"><span style="color:#abb2bf;">&lt;/</span><span style="color:#e5677b;">style</span><span style="color:#abb2bf;">&gt;</span></div>
<div class="a" style="left:1130.5px;top:786px;width:5.5px;height:55px;background:#3a78e8;"></div>
<svg class="a" style="left:1268px;top:788px" width="18" height="30"><path d="M4 2 C7 2 9 3 9 5 C9 3 11 2 14 2 M9 5 V24 M4 27 C7 27 9 26 9 24 C9 26 11 27 14 27 M6 14 H12" fill="none" stroke="#f0f0f0" stroke-width="1.8"/></svg>
<svg class="a" style="left:2270px;top:280px" width="146" height="100" viewBox="2270 280 146 100"><rect x="2293" y="286" width="40" height="1.5" fill="#b05a78" opacity="0.5"/><rect x="2301" y="288.75" width="70" height="1.5" fill="#5e636c" opacity="0.5"/><rect x="2295" y="291.5" width="14" height="1.5" fill="#8a8f98" opacity="0.5"/><rect x="2293" y="294.25" width="48" height="1.5" fill="#a05a70" opacity="0.5"/><rect x="2297" y="297.0" width="20" height="1.5" fill="#5e636c" opacity="0.5"/><rect x="2293" y="299.75" width="32" height="1.5" fill="#a05a70" opacity="0.5"/><rect x="2295" y="302.5" width="48" height="1.5" fill="#4a5a70" opacity="0.5"/><rect x="2293" y="305.25" width="20" height="1.5" fill="#c060c0" opacity="0.5"/><rect x="2293" y="308.0" width="52" height="1.5" fill="#c06080" opacity="0.5"/><rect x="2295" y="310.75" width="24" height="1.5" fill="#9aa0a8" opacity="0.5"/><rect x="2297" y="313.5" width="36" height="1.5" fill="#5e636c" opacity="0.5"/><rect x="2295" y="316.25" width="16" height="1.5" fill="#a05a70" opacity="0.5"/><rect x="2295" y="319.0" width="6" height="1.5" fill="#8a8f98" opacity="0.5"/><rect x="2297" y="321.75" width="22" height="1.5" fill="#5e636c" opacity="0.5"/><rect x="2295" y="324.5" width="22" height="1.5" fill="#a05a70" opacity="0.5"/><rect x="2297" y="330.0" width="10" height="1.5" fill="#5a8ad0" opacity="0.5"/><rect x="2297" y="332.75" width="16" height="1.5" fill="#c080d0" opacity="0.5"/><rect x="2295" y="335.5" width="6" height="1.5" fill="#6a9ad0" opacity="0.5"/><rect x="2293" y="338.25" width="10" height="1.5" fill="#c070d0" opacity="0.5"/><rect x="2293" y="343.75" width="20" height="1.5" fill="#8a8f98" opacity="0.5"/><rect x="2293" y="349.25" width="52" height="1.5" fill="#9aa0a8" opacity="0.5"/><rect x="2293" y="354.75" width="20" height="1.5" fill="#a05a70" opacity="0.5"/><rect x="2289" y="288" width="1.5" height="10" fill="#167ea3" opacity="0.6"/><rect x="2289" y="304" width="1.5" height="44" fill="#167ea3" opacity="0.6"/><rect x="2289" y="348" width="1.5" height="10" fill="#4f8f22" opacity="0.6"/><rect x="2289" y="358" width="1.5" height="12" fill="#8a9a22" opacity="0.6"/><rect x="2293" y="343.5" width="93" height="2.5" fill="#2a4060" opacity="0.6"/></svg>
<div class="a" style="left:2386.5px;top:285px;width:1.2px;height:1136px;background:#2f3238;"></div>
<div class="a" style="left:2387.5px;top:307.6px;width:9px;height:47.0px;background:#0b5c76;"></div>
<div class="a" style="left:2387.5px;top:423.6px;width:9px;height:118.4px;background:#0b5c76;"></div>
<div class="a" style="left:2387.5px;top:542px;width:9px;height:19.8px;background:#1d4e60;"></div>
<div class="a" style="left:2387.5px;top:584px;width:9px;height:46.8px;background:#1d4c5c;"></div>
<div class="a" style="left:2387.5px;top:653px;width:9px;height:157px;background:#224c6a;"></div>
<div class="a" style="left:2387.5px;top:816px;width:9px;height:60.7px;background:#36492f;"></div>
<div class="a" style="left:2387.5px;top:907px;width:9px;height:69px;background:#36492f;"></div>
<div class="a" style="left:2387.5px;top:542px;width:28.5px;height:465px;background:rgba(121,126,134,0.21);"></div>
<div class="a" style="left:2387.5px;top:746px;width:28.5px;height:2.5px;background:#4270b8;"></div>
<svg class="a" style="left:340px;top:1425px" width="350" height="40" viewBox="340 1425 350 40" fill="none" stroke="#bcc0c7" stroke-width="2.2">
<circle cx="355" cy="1434" r="4"/><circle cx="367" cy="1440" r="4"/><circle cx="355" cy="1458" r="4"/>
<path d="M355 1438 V1454 M367 1444 C367 1450 355 1448 355 1454"/>
<path d="M498 1451 C492 1451 494 1443 499 1443 C500 1437 510 1436 512 1442 C518 1441 520 1450 514 1451 M507 1457 V1445 M503 1449 L507 1445 L511 1449"/>
<circle cx="571.5" cy="1445.5" r="11.5"/><path d="M566 1440 L577 1451 M577 1440 L566 1451"/>
<path d="M629 1433.5 L641.5 1456 H616.5 Z" stroke-linejoin="round"/><path d="M629 1442 V1449 M629 1451.5 V1453"/>
</svg>
<div class="a sb" style="left:382px;top:1422px;">master</div>
<div class="a sb" style="left:590px;top:1422px;">0</div>
<div class="a sb" style="left:650px;top:1422px;">0</div>
<svg class="a" style="left:700px;top:1428px" width="30" height="36" viewBox="0 0 30 36" fill="none" stroke="#bcc0c7" stroke-width="2.2">
<ellipse cx="14" cy="7" rx="10" ry="4"/><path d="M4 7 V27 C4 32 24 32 24 27 V7"/></svg>
<div class="a sb" style="left:734px;top:1422px;">53</div>
<div class="a sb" style="left:798px;top:1422px;">Git Graph</div>
<div class="a sb" style="left:940px;top:1422px;">[TypeScript Importer]: Symbols: 2</div>
<svg class="a" style="left:1354px;top:1433px" width="32" height="26" viewBox="0 0 32 26" fill="none" stroke="#bcc0c7" stroke-width="2.2">
<path d="M2 15 C8 3 24 3 30 15"/><circle cx="16" cy="15" r="4.5"/></svg>
<div class="a sb" style="left:1391px;top:1422px;">438</div>
<div class="a sb" style="left:1479px;top:1422px;">Spaces: 2</div>
<div class="a sb" style="left:1623px;top:1422px;">UTF-8</div>
<div class="a sb" style="left:1731px;top:1422px;">LF</div>
<div class="a sb" style="left:1793px;top:1422px;">Vue</div>
<div class="a sb" style="left:1869px;top:1422px;">TSLint</div>
<div class="a sb" style="left:1976px;top:1422px;">Prettier</div>
<div class="a sb" style="left:2091px;top:1422px;">Formatting:</div>
<svg class="a" style="left:2233px;top:1436px" width="22" height="22"><path d="M3 3 L19 19 M19 3 L3 19" stroke="#bcc0c7" stroke-width="2.2"/></svg>
<svg class="a" style="left:2285px;top:1425px" width="110" height="36" viewBox="2285 1425 110 36" fill="none" stroke="#bcc0c7" stroke-width="1.8">
<circle cx="2302.5" cy="1442" r="4.8"/><path d="M2293.5 1456 C2294 1450 2297.5 1447.5 2302.5 1447.5 C2307.5 1447.5 2311 1450 2311.5 1456"/>
<path d="M2358.5 1452 H2381.5 C2379 1449 2378.5 1446 2378.5 1442 C2378.5 1436 2375 1431.5 2370 1431.5 C2365 1431.5 2361.5 1436 2361.5 1442 C2361.5 1446 2361 1449 2358.5 1452 M2367 1455.5 C2368 1457.5 2372 1457.5 2373 1455.5"/>
</svg>
<svg class="a" style="left:2257px;top:1406px" width="31" height="56" viewBox="0 0 40 58" preserveAspectRatio="none">
<path d="M18 54 C8 52 2 44 3 34 C4 26 10 20 13 14 C15 10 16 7 16 3 C22 8 26 16 25 24 C27 22 29 20 30 17 C36 24 38 34 36 42 C34 50 27 55 18 54 Z M22 50 C28 47 31 40 29 33 C27 37 24 40 21 40 C22 44 22 47 22 50 Z" fill="#a83242" fill-rule="evenodd" opacity="0.75"/>
</svg>
<div class="a" style="left:2291px;top:1415px;font-size:37px;color:rgba(120,30,45,0.35);-webkit-text-stroke:1.6px rgba(185,50,65,0.75);line-height:46px;letter-spacing:-1px">慕课网</div>
<div class="a" style="left:21px;top:1467px;width:2630px;height:5px;background:#1c1619;"></div>
<div class="a" style="left:21px;top:1467px;width:1888px;height:5px;background:#ee1c1c;"></div>
<div class="a" style="left:1909px;top:1467px;width:254px;height:5px;background:#6a6c70;"></div>
<div class="a" style="left:21px;top:1472px;width:2630px;height:95px;background:#080b10;"></div>
<div class="a" style="left:0px;top:1567px;width:2651px;height:15px;background:#17191b;"></div>
<div class="a" style="left:55.5px;top:1501.5px;width:11px;height:35px;background:#ee1500;"></div>
<div class="a" style="left:76px;top:1501.5px;width:11px;height:35px;background:#ee1500;"></div>
<div class="a " style="left:211px;top:1500px;font-size:33px;color:#8f9399;line-height:48px">3:49 / 5:26</div>
<svg class="a" style="left:1748px;top:1502px" width="44" height="46" viewBox="0 0 44 46">
<path d="M3 16 H11 L22 6 V40 L11 30 H3 Z" fill="#a0a4aa"/>
<path d="M28 15 C32 19 32 27 28 31" fill="none" stroke="#a0a4aa" stroke-width="3.5" stroke-linecap="round"/>
<path d="M33 10 C40 17 40 29 33 36" fill="none" stroke="#a0a4aa" stroke-width="3.5" stroke-linecap="round"/></svg>
<div class="a" style="left:1843px;top:1520px;width:200px;height:10px;background:#ee1c1c;border-radius:5px"></div>
<div class="a" style="left:2027px;top:1512px;width:26px;height:26px;border-radius:13px;background:#a8adb5"></div>
<div class="a" style="left:2101px;top:1498px;width:96px;height:48px;padding-top:3px;border-radius:6px;background:#9fa3a9;color:#1e2024;font-size:30px;line-height:45px;text-align:center;letter-spacing:0px;-webkit-text-stroke:0.4px #1e2024">1.25x</div>
<div class="a" style="left:2221px;top:1498px;width:96px;height:48px;padding-top:3px;border-radius:6px;background:#9fa3a9;color:#1e2024;font-size:28px;line-height:45px;text-align:center;letter-spacing:1px;-webkit-text-stroke:0.4px #1e2024">高清</div>
<div class="a" style="left:2341px;top:1498px;width:96px;height:48px;padding-top:3px;border-radius:6px;background:#9fa3a9;color:#1e2024;font-size:28px;line-height:45px;text-align:center;letter-spacing:1px;-webkit-text-stroke:0.4px #1e2024">线路</div>
<svg class="a" style="left:2450px;top:1496px" width="201" height="60" viewBox="2450 1496 201 60"><path d="M19.14 12.94c.04-.3.06-.61.06-.94 0-.32-.02-.64-.07-.94l2.03-1.58c.18-.14.23-.41.12-.61l-1.92-3.32c-.12-.22-.37-.29-.59-.22l-2.39.96c-.5-.38-1.03-.7-1.62-.94l-.36-2.54c-.04-.24-.24-.41-.48-.41h-3.840c-.24 0-.43.17-.47.41l-.36 2.54c-.59.24-1.13.57-1.62.94l-2.39-.96c-.22-.08-.47 0-.59.22L2.74 8.87c-.12.21-.08.47.12.61l2.03 1.58c-.05.3-.09.63-.09.94s.02.64.07.94l-2.03 1.58c-.18.14-.23.41-.12.61l1.92 3.32c.12.22.37.29.59.22l2.39-.96c.5.38 1.03.7 1.62.94l.36 2.54c.05.24.24.41.48.41h3.84c.24 0 .44-.17.47-.41l.36-2.54c.59-.24 1.13-.56 1.62-.94l2.39.96c.22.08.47 0 .59-.22l1.92-3.32c.12-.22.07-.47-.12-.61l-2.01-1.58zM12 15.6c-1.98 0-3.6-1.62-3.6-3.6s1.62-3.6 3.6-3.6 3.6 1.62 3.6 3.6-1.62 3.6-3.6 3.6z" fill="#a8adb5" transform="translate(2457.2 1500.2) scale(1.816)"/><path d="M2544.5 1516 V1510 a3 3 0 0 1 3 -3 H2553 M2566 1507 H2571.5 a3 3 0 0 1 3 3 V1516 M2574.5 1528 V1534 a3 3 0 0 1 -3 3 H2566 M2553 1537 H2547.5 a3 3 0 0 1 -3 -3 V1528" fill="none" stroke="#a8adb5" stroke-width="3.6" stroke-linecap="round"/><path d="M2651 1508 H2623 a2 2 0 0 0 -2 2 V1533 a2 2 0 0 0 2 2 H2651" fill="none" stroke="#a8adb5" stroke-width="3.6"/><rect x="2640" y="1506" width="11" height="12" fill="#a8adb5"/></svg>
</body></html>
